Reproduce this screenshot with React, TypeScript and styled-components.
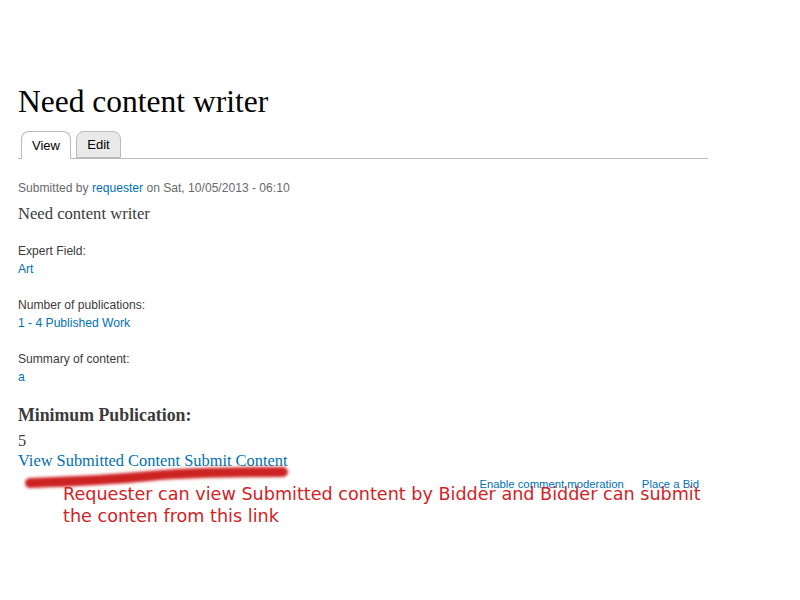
import React from "react";
import styled, { createGlobalStyle } from "styled-components";

const Global = createGlobalStyle`
  html, body { margin: 0; padding: 0; background: #fff; }
  body { font-family: "Liberation Sans", Arial, sans-serif; color: #3b3b3b; }
`;

const Page = styled.div`
  position: relative;
  width: 800px;
  height: 600px;
  overflow: hidden;
`;

const Main = styled.main`
  width: 690px;
  padding: 84px 0 0 18px;
`;

const Title = styled.h1`
  margin: 0;
  font-family: "Liberation Serif", "Times New Roman", serif;
  font-weight: normal;
  font-size: 31.5px;
  line-height: 36px;
  color: #000;
`;

const Tabs = styled.ul`
  list-style: none;
  margin: 11px 0 0;
  padding: 0 0 0 3px;
  display: flex;
  gap: 5px;
  border-bottom: 1px solid #bbb;
  height: 27px;
`;

const Tab = styled.li<{ $active?: boolean }>`
  box-sizing: border-box;
  height: ${(p) => (p.$active ? "28px" : "27px")};
  width: ${(p) => (p.$active ? "50px" : "45px")};
  border: 1px solid #bbb;
  border-bottom: ${(p) => (p.$active ? "none" : "1px solid #bbb")};
  border-radius: 8px 8px 0 0;
  background: ${(p) => (p.$active ? "#fff" : "#e9e9e9")};
  display: flex;
  align-items: center;
  justify-content: center;
  padding-bottom: 1px;
  font-size: 13px;
  color: #000;
`;

const Submitted = styled.div`
  margin-top: 20px;
  font-size: 12.1px;
  line-height: 18px;
  color: #68696b;
`;

const Link = styled.a`
  color: #0071b3;
  text-decoration: none;
`;

const BodyText = styled.p`
  margin: 7px 0 0;
  font-family: "Liberation Serif", "Times New Roman", serif;
  font-size: 16.6px;
  line-height: 20px;
`;

const Field = styled.div`
  margin-top: 18px;
  font-size: 12.1px;
  line-height: 18px;
  &:first-of-type { margin-top: 20px; }
`;

const FieldLabel = styled.div`
  color: #3b3b3b;
`;

const SectionTitle = styled.h3`
  margin: 19px 0 0;
  font-family: "Liberation Serif", "Times New Roman", serif;
  font-weight: bold;
  font-size: 17.8px;
  line-height: 20px;
  color: #3b3b3b;
`;

const SerifLine = styled.div<{ $mt?: number }>`
  font-family: "Liberation Serif", "Times New Roman", serif;
  font-size: 16.4px;
  line-height: 20px;
  margin-top: ${(p) => p.$mt ?? 0}px;
`;

const InlineLinks = styled.ul`
  list-style: none;
  margin: 4px 0 0;
  padding: 0 9px 0 0;
  display: flex;
  justify-content: flex-end;
  gap: 18px;
  font-size: 11.3px;
  line-height: 18px;
`;

const Annotation = styled.div`
  position: absolute;
  left: 63px;
  top: 483px;
  font-family: "DejaVu Sans", sans-serif;
  font-size: 17.6px;
  line-height: 22px;
  color: #d32226;
  width: 730px;
`;

const Stroke = styled.svg`
  position: absolute;
  left: 0;
  top: 455px;
  pointer-events: none;
`;

export default function App() {
  return (
    <Page>
      <Global />
      <Main>
        <Title>Need content writer</Title>
        <Tabs>
          <Tab $active>View</Tab>
          <Tab>Edit</Tab>
        </Tabs>
        <Submitted>
          Submitted by <Link href="#">requester</Link> on Sat, 10/05/2013 - 06:10
        </Submitted>
        <BodyText>Need content writer</BodyText>
        <Field>
          <FieldLabel>Expert Field:</FieldLabel>
          <Link href="#">Art</Link>
        </Field>
        <Field>
          <FieldLabel>Number of publications:</FieldLabel>
          <Link href="#">1 - 4 Published Work</Link>
        </Field>
        <Field>
          <FieldLabel>Summary of content:</FieldLabel>
          <Link href="#">a</Link>
        </Field>
        <SectionTitle>Minimum Publication:</SectionTitle>
        <SerifLine $mt={6}>5</SerifLine>
        <SerifLine>
          <Link href="#">View Submitted Content</Link> <Link href="#">Submit Content</Link>
        </SerifLine>
        <InlineLinks>
          <li><Link href="#">Enable comment moderation</Link></li>
          <li><Link href="#">Place a Bid</Link></li>
        </InlineLinks>
      </Main>
      <Stroke width="320" height="45" viewBox="0 455 320 45">
        <defs>
          <filter id="blur" x="-10%" y="-100%" width="120%" height="300%">
            <feGaussianBlur stdDeviation="1.4" />
          </filter>
        </defs>
        <path
          d="M30 483 C 60 482, 110 480, 150 476 C 190 472, 240 472, 283 472"
          stroke="#cc2121"
          strokeWidth="10"
          strokeLinecap="round"
          fill="none"
          filter="url(#blur)"
        />
      </Stroke>
      <Annotation>
        Requester can view Submitted content by Bidder and Bidder can submit
        <br />
        the conten from this link
      </Annotation>
    </Page>
  );
}
